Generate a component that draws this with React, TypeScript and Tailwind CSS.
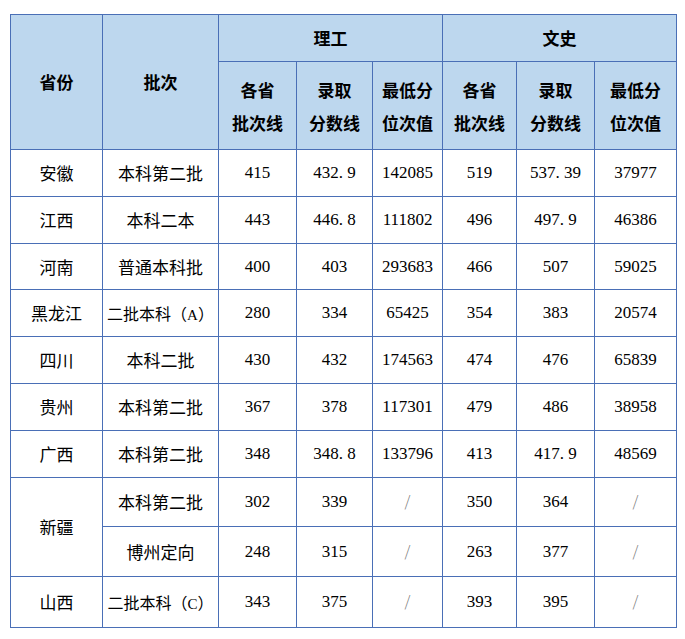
import React from "react";

const cjk = "font-['Noto_Sans_CJK_SC',sans-serif]";
const num = "font-['Liberation_Serif','Noto_Sans_CJK_SC',serif]";
const bd = "border border-[#4a6fb6]";

type Row = { prov?: string; span?: number; batch: string; v: string[]; h: string };

const rows: Row[] = [
  { prov: "安徽", batch: "本科第二批", v: ["415", "432.9", "142085", "519", "537.39", "37977"], h: "h-[47px]" },
  { prov: "江西", batch: "本科二本", v: ["443", "446.8", "111802", "496", "497.9", "46386"], h: "h-[47px]" },
  { prov: "河南", batch: "普通本科批", v: ["400", "403", "293683", "466", "507", "59025"], h: "h-[46px]" },
  { prov: "黑龙江", batch: "二批本科（A）", v: ["280", "334", "65425", "354", "383", "20574"], h: "h-[47px]" },
  { prov: "四川", batch: "本科二批", v: ["430", "432", "174563", "474", "476", "65839"], h: "h-[47px]" },
  { prov: "贵州", batch: "本科第二批", v: ["367", "378", "117301", "479", "486", "38958"], h: "h-[47px]" },
  { prov: "广西", batch: "本科第二批", v: ["348", "348.8", "133796", "413", "417.9", "48569"], h: "h-[47px]" },
  { prov: "新疆", span: 2, batch: "本科第二批", v: ["302", "339", "/", "350", "364", "/"], h: "h-[49px]" },
  { batch: "博州定向", v: ["248", "315", "/", "263", "377", "/"], h: "h-[50px]" },
  { prov: "山西", batch: "二批本科（C）", v: ["343", "375", "/", "393", "395", "/"], h: "h-[51px]" },
];

function Num({ t }: { t: string }) {
  if (t === "/") {
    return <span className={`${cjk} text-[#777] text-[15px] font-light`}>/</span>;
  }
  const parts = t.split(".");
  if (parts.length === 1) return <span>{t}</span>;
  return (
    <span>
      {parts[0]}
      <span className="inline-block w-[8.5px] text-left">.</span>
      {parts[1]}
    </span>
  );
}

function Batch({ t }: { t: string }) {
  const m = t.match(/^(.*)（(.)）$/);
  if (!m) return <>{t}</>;
  return (
    <span className="text-[16px]">
      {m[1]}（<span className={`${num} text-[15px]`}>{m[2]}</span>）
    </span>
  );
}

export default function App() {
  return (
    <div className="w-[685px] h-[639px] bg-white pt-[14px] pl-[10px]">
      <table className="border-collapse table-fixed w-[666px] text-black">
        <colgroup>
          <col className="w-[92px]" />
          <col className="w-[116px]" />
          <col className="w-[78px]" />
          <col className="w-[76px]" />
          <col className="w-[70px]" />
          <col className="w-[74px]" />
          <col className="w-[78px]" />
          <col className="w-[82px]" />
        </colgroup>
        <thead>
          <tr className="h-[47px] bg-[#bdd7ee]">
            <th rowSpan={2} className={`${bd} ${cjk} text-[17px] font-bold`}>省份</th>
            <th rowSpan={2} className={`${bd} ${cjk} text-[17px] font-bold`}>批次</th>
            <th colSpan={3} className={`${bd} ${cjk} text-[17px] font-bold`}>理工</th>
            <th colSpan={3} className={`${bd} ${cjk} text-[17px] font-bold`}>文史</th>
          </tr>
          <tr className="h-[88px] bg-[#bdd7ee]">
            {["各省|批次线", "录取|分数线", "最低分|位次值", "各省|批次线", "录取|分数线", "最低分|位次值"].map((s, i) => (
              <th key={i} className={`${bd} ${cjk} text-[17px] font-bold leading-[33px]`}>
                {s.split("|").map((l, j) => (
                  <div key={j}>{l}</div>
                ))}
              </th>
            ))}
          </tr>
        </thead>
        <tbody>
          {rows.map((r, i) => (
            <tr key={i} className={r.h}>
              {r.prov !== undefined && (
                <td rowSpan={r.span ?? 1} className={`${bd} ${cjk} text-[17px] text-center align-middle`}>
                  {r.prov}
                </td>
              )}
              <td className={`${bd} ${cjk} text-[17px] text-center align-middle whitespace-nowrap`}>
                <Batch t={r.batch} />
              </td>
              {r.v.map((v, j) => (
                <td key={j} className={`${bd} ${num} text-[17px] text-center align-middle`}>
                  <Num t={v} />
                </td>
              ))}
            </tr>
          ))}
        </tbody>
      </table>
    </div>
  );
}
